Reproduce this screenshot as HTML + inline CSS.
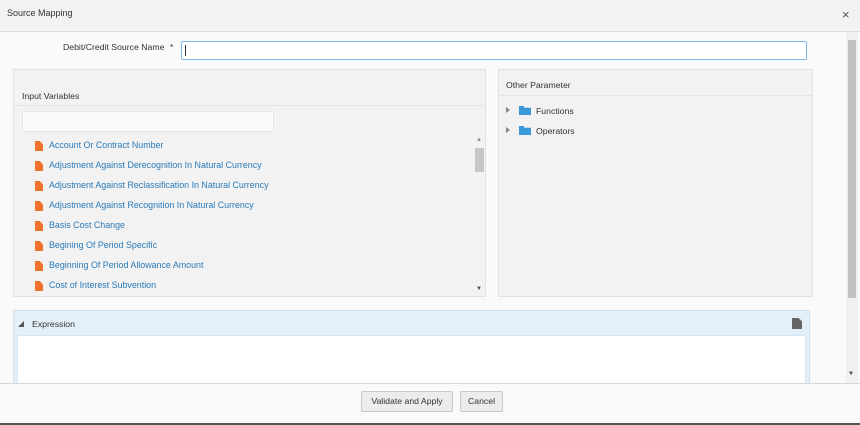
<!DOCTYPE html>
<html><head><style>
*{box-sizing:border-box;margin:0;padding:0}
body{width:860px;height:425px;overflow:hidden;background:#fafafa;font-family:"Liberation Sans",sans-serif;font-size:8.7px;color:#333;position:relative}
.abs{position:absolute}
.hdr{left:0;top:0;width:860px;height:32px;background:#f2f2f2;border-bottom:1px solid #ddd}
.panel{background:#f2f2f2;border:1px solid #e2e2e2}
.item{position:absolute;left:21px;height:14px;color:#2a7ab8;white-space:nowrap;font-size:8.9px}
.item i{position:absolute;left:0;top:1px;width:8px;height:10px;background:#f0722a;clip-path:polygon(0 0,60% 0,100% 35%,100% 100%,0 100%)}
.item span{position:absolute;left:14px;top:0}
.btn{position:absolute;top:391px;height:21px;border:1px solid #c8c8c8;background:#ececec;border-radius:2px;text-align:center;line-height:19px;color:#333}
.fold{position:absolute;left:20px;width:12px;height:9px;background:#3a9ad9;clip-path:polygon(0 0,40% 0,45% 20%,100% 20%,100% 100%,0 100%)}
.tri{position:absolute;left:7px;width:0;height:0;border-left:4px solid #888;border-top:3.5px solid transparent;border-bottom:3.5px solid transparent}
</style></head><body>
<div class="abs hdr"><div class="abs" style="left:7px;top:8px;font-size:9px">Source Mapping</div><div class="abs" style="left:842px;top:7px;font-size:13px;color:#555">×</div></div>
<div class="abs" style="left:63px;top:42px">Debit/Credit Source Name <span style="margin-left:3px">*</span></div>
<div class="abs" style="left:181px;top:41px;width:626px;height:19px;border:1px solid #7fb7e8;background:#fff;border-radius:2px"><div class="abs" style="left:3px;top:3px;width:1px;height:11px;background:#333"></div></div>

<div class="abs panel" style="left:13px;top:69px;width:473px;height:228px">
 <div class="abs" style="left:8px;top:21px">Input Variables</div>
 <div class="abs" style="left:0;top:35px;width:471px;border-top:1px solid #e4e4e4"></div>
 <div class="abs" style="left:8px;top:41px;width:252px;height:21px;background:#fafafa;border:1px solid #e6e6e6"></div>
 <div class="item" style="top:70px"><i></i><span>Account Or Contract Number</span></div>
 <div class="item" style="top:90px"><i></i><span>Adjustment Against Derecognition In Natural Currency</span></div>
 <div class="item" style="top:110px"><i></i><span>Adjustment Against Reclassification In Natural Currency</span></div>
 <div class="item" style="top:130px"><i></i><span>Adjustment Against Recognition In Natural Currency</span></div>
 <div class="item" style="top:150px"><i></i><span>Basis Cost Change</span></div>
 <div class="item" style="top:170px"><i></i><span>Begining Of Period Specific</span></div>
 <div class="item" style="top:190px"><i></i><span>Beginning Of Period Allowance Amount</span></div>
 <div class="item" style="top:210px"><i></i><span>Cost of Interest Subvention</span></div>
 <div class="abs" style="left:462px;top:67px;font-size:6px;color:#888">▲</div>
 <div class="abs" style="left:461px;top:78px;width:9px;height:24px;background:#c6c6c6"></div>
 <div class="abs" style="left:462px;top:216px;font-size:6px;color:#444">▼</div>
</div>

<div class="abs panel" style="left:498px;top:69px;width:315px;height:228px">
 <div class="abs" style="left:7px;top:10px">Other Parameter</div>
 <div class="abs" style="left:0;top:25px;width:313px;border-top:1px solid #e4e4e4"></div>
 <div class="tri" style="top:37px"></div><div class="fold" style="top:36px"></div><div class="abs" style="left:37px;top:36px">Functions</div>
 <div class="tri" style="top:57px"></div><div class="fold" style="top:56px"></div><div class="abs" style="left:37px;top:56px">Operators</div>
</div>

<div class="abs" style="left:13px;top:310px;width:797px;height:80px;background:#e3f0fa;border:1px solid #cfe3f3">
 <div class="abs" style="left:4px;top:10px;width:0;height:0;border-left:6px solid transparent;border-bottom:6px solid #555"></div>
 <div class="abs" style="left:18px;top:8px">Expression</div>
 <div class="abs" style="left:778px;top:7px;width:10px;height:11px;background:#666;clip-path:polygon(0 0,65% 0,100% 30%,100% 100%,0 100%)"></div>
 <div class="abs" style="left:3px;top:24px;width:789px;height:60px;background:#fff;border:1px solid #d6e6f2"></div>
</div>

<div class="abs" style="left:846px;top:32px;width:12px;height:351px;background:#f0f0f0"></div>
<div class="abs" style="left:848px;top:40px;width:8px;height:258px;background:#c2c2c2"></div>
<div class="abs" style="left:848px;top:371px;font-size:6px;color:#444">▼</div>

<div class="abs" style="left:0;top:383px;width:860px;height:42px;background:#fafafa;border-top:1px solid #d8d8d8;border-bottom:2px solid #555"></div>
<div class="btn" style="left:361px;width:92px">Validate and Apply</div>
<div class="btn" style="left:460px;width:43px">Cancel</div>
</body></html>
